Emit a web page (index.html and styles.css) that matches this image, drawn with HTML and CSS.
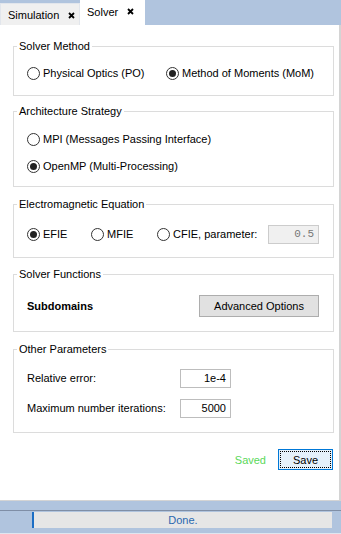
FILE: index.html
```html
<!DOCTYPE html>
<html>
<head>
    <title>Solver</title>
    <link rel="stylesheet" href="styles.css">
</head>
<body>
    <div class="tabbar">
        <div class="tab">
            <span>Simulation</span>
            <svg class="close" width="7" height="7" viewBox="0 0 7 7"><path d="M1 1L6 6M6 1L1 6" stroke="#000" stroke-width="1.8"/></svg>
        </div>
        <div class="tab active">
            <span>Solver</span>
            <svg class="close" width="7" height="7" viewBox="0 0 7 7"><path d="M1 1L6 6M6 1L1 6" stroke="#000" stroke-width="1.8"/></svg>
        </div>
    </div>

    <div class="panel">
        <fieldset class="group method">
            <legend>Solver Method</legend>
            <div class="row">
                <label class="radio w-po"><span class="dot"></span>Physical Optics (PO)</label>
                <label class="radio"><span class="dot on"></span>Method of Moments (MoM)</label>
            </div>
        </fieldset>

        <fieldset class="group arch">
            <legend>Architecture Strategy</legend>
            <label class="radio"><span class="dot"></span>MPI (Messages Passing Interface)</label>
            <label class="radio"><span class="dot on"></span>OpenMP (Multi-Processing)</label>
        </fieldset>

        <fieldset class="group equation">
            <legend>Electromagnetic Equation</legend>
            <div class="row">
                <label class="radio w-efie"><span class="dot on"></span>EFIE</label>
                <label class="radio w-mfie"><span class="dot"></span>MFIE</label>
                <label class="radio w-cfie"><span class="dot"></span>CFIE, parameter:</label>
                <div class="field disabled param">0.5</div>
            </div>
        </fieldset>

        <fieldset class="group functions">
            <legend>Solver Functions</legend>
            <div class="row spread">
                <b class="sub">Subdomains</b>
                <button class="btn">Advanced Options</button>
            </div>
        </fieldset>

        <fieldset class="group other">
            <legend>Other Parameters</legend>
            <div class="param-row">
                <span class="lbl">Relative error:</span>
                <div class="field num">1e-4</div>
            </div>
            <div class="param-row">
                <span class="lbl">Maximum number iterations:</span>
                <div class="field num">5000</div>
            </div>
        </fieldset>

        <div class="actions">
            <span class="saved">Saved</span>
            <button class="btn save">Save</button>
        </div>
    </div>

    <div class="strip"></div>
    <div class="status">
        <div class="progress"><span>Done.</span></div>
    </div>
</body>
</html>
```

FILE: styles.css
```css
body {
    margin: 0;
    font-family: "Liberation Sans", Arial, sans-serif;
    font-size: 11px;
    color: #000;
    background-color: #b0c4de;
    width: 341px;
    height: 534px;
    overflow: hidden;
}

/* tabs */
.tabbar {
    display: flex;
    align-items: flex-end;
    height: 25px;
    background-color: #b0c4de;
}

.tab {
    display: flex;
    align-items: center;
    box-sizing: border-box;
    height: 22px;
    width: 80px;
    padding: 1px 0 0 7px;
    background-color: #f0f0f0;
    border: 1px solid #e2e6ec;
    border-bottom: none;
    white-space: nowrap;
}

.tab.active {
    height: 25px;
    width: 65px;
    padding: 0 0 2px 7px;
    background-color: #fff;
    border: none;
}

.tab .close {
    margin-left: 9px;
}

.tab.active .close {
    margin-left: 9px;
}

/* main panel */
.panel {
    box-sizing: border-box;
    height: 476px;
    width: 341px;
    background-color: #fff;
    border-right: 2px solid #d4d4d4;
    border-bottom: 1px solid #d4d4d4;
    padding: 15px 0 0 13px;
}

.group {
    box-sizing: border-box;
    width: 321px;
    min-width: 0;
    margin: 0 0 10px 0;
    border: 1px solid #dcdcdc;
    padding: 10px 0 12px 13px;
}

.group legend {
    padding: 0 2px;
    margin-left: -10px;
    line-height: 13px;
}

.method { margin-bottom: 9px; }
.arch { padding-top: 11px; padding-bottom: 10px; margin-bottom: 11px; }
.equation { padding-top: 13px; padding-bottom: 13px; }
.functions { padding-top: 14px; padding-bottom: 14px; margin-bottom: 11px; }
.other { padding-top: 12px; padding-bottom: 14px; }

.row {
    display: flex;
    align-items: center;
    height: 20px;
}

.row.spread {
    height: 22px;
    justify-content: space-between;
    padding-right: 14px;
}

.radio {
    display: flex;
    align-items: center;
    height: 20px;
    white-space: nowrap;
}

.arch .radio + .radio {
    margin-top: 7px;
}

.w-po { width: 139px; }
.w-efie { width: 64px; }
.w-mfie { width: 66px; }
.w-cfie { width: 111px; }

.dot {
    position: relative;
    box-sizing: border-box;
    width: 13px;
    height: 13px;
    border: 1px solid #333;
    border-radius: 50%;
    margin-right: 3px;
    flex: none;
}

.dot.on::after {
    content: "";
    position: absolute;
    left: 2px;
    top: 2px;
    width: 7px;
    height: 7px;
    border-radius: 50%;
    background-color: #222;
}

.field {
    box-sizing: border-box;
    height: 19px;
    line-height: 17px;
    border: 1px solid #bdbdbd;
    text-align: right;
    padding-right: 4px;
    background-color: #fff;
}

.field.disabled {
    background-color: #f0f0f0;
    border-color: #cccccc;
    color: #777;
    font-family: "Liberation Mono", "DejaVu Sans Mono", monospace;
}

.param {
    width: 51px;
}

.sub {
    font-size: 11px;
}

.btn {
    font-family: "Liberation Sans", Arial, sans-serif;
    font-size: 11px;
    color: #000;
    background-color: #e1e1e1;
    border: 1px solid #adadad;
    width: 120px;
    height: 22px;
    padding: 0;
}

.param-row {
    display: flex;
    align-items: center;
    height: 20px;
}

.param-row + .param-row {
    margin-top: 10px;
}

.lbl {
    width: 153px;
}

.field.num {
    width: 51px;
}

.actions {
    display: flex;
    justify-content: flex-end;
    align-items: center;
    padding-right: 6px;
    margin-top: 16px;
}

.saved {
    color: #5ad85a;
    margin-right: 12px;
}

.btn.save {
    width: 55px;
    height: 21px;
    background-color: #e5f1fb;
    border: 1px solid #0078d7;
    outline: 1px dotted #000;
    outline-offset: -3px;
}

/* status bar */
.strip {
    height: 9px;
}

.status {
    box-sizing: border-box;
    height: 24px;
    border-top: 1px solid #7f8ea6;
    border-bottom: 1px solid #dfe6ef;
    padding: 1px 9px 0 32px;
}

.progress {
    height: 16px;
    line-height: 16px;
    background-color: #e6e6e6;
    border-left: 2px solid #1c6ec4;
    text-align: center;
    color: #2a68b0;
}
```
